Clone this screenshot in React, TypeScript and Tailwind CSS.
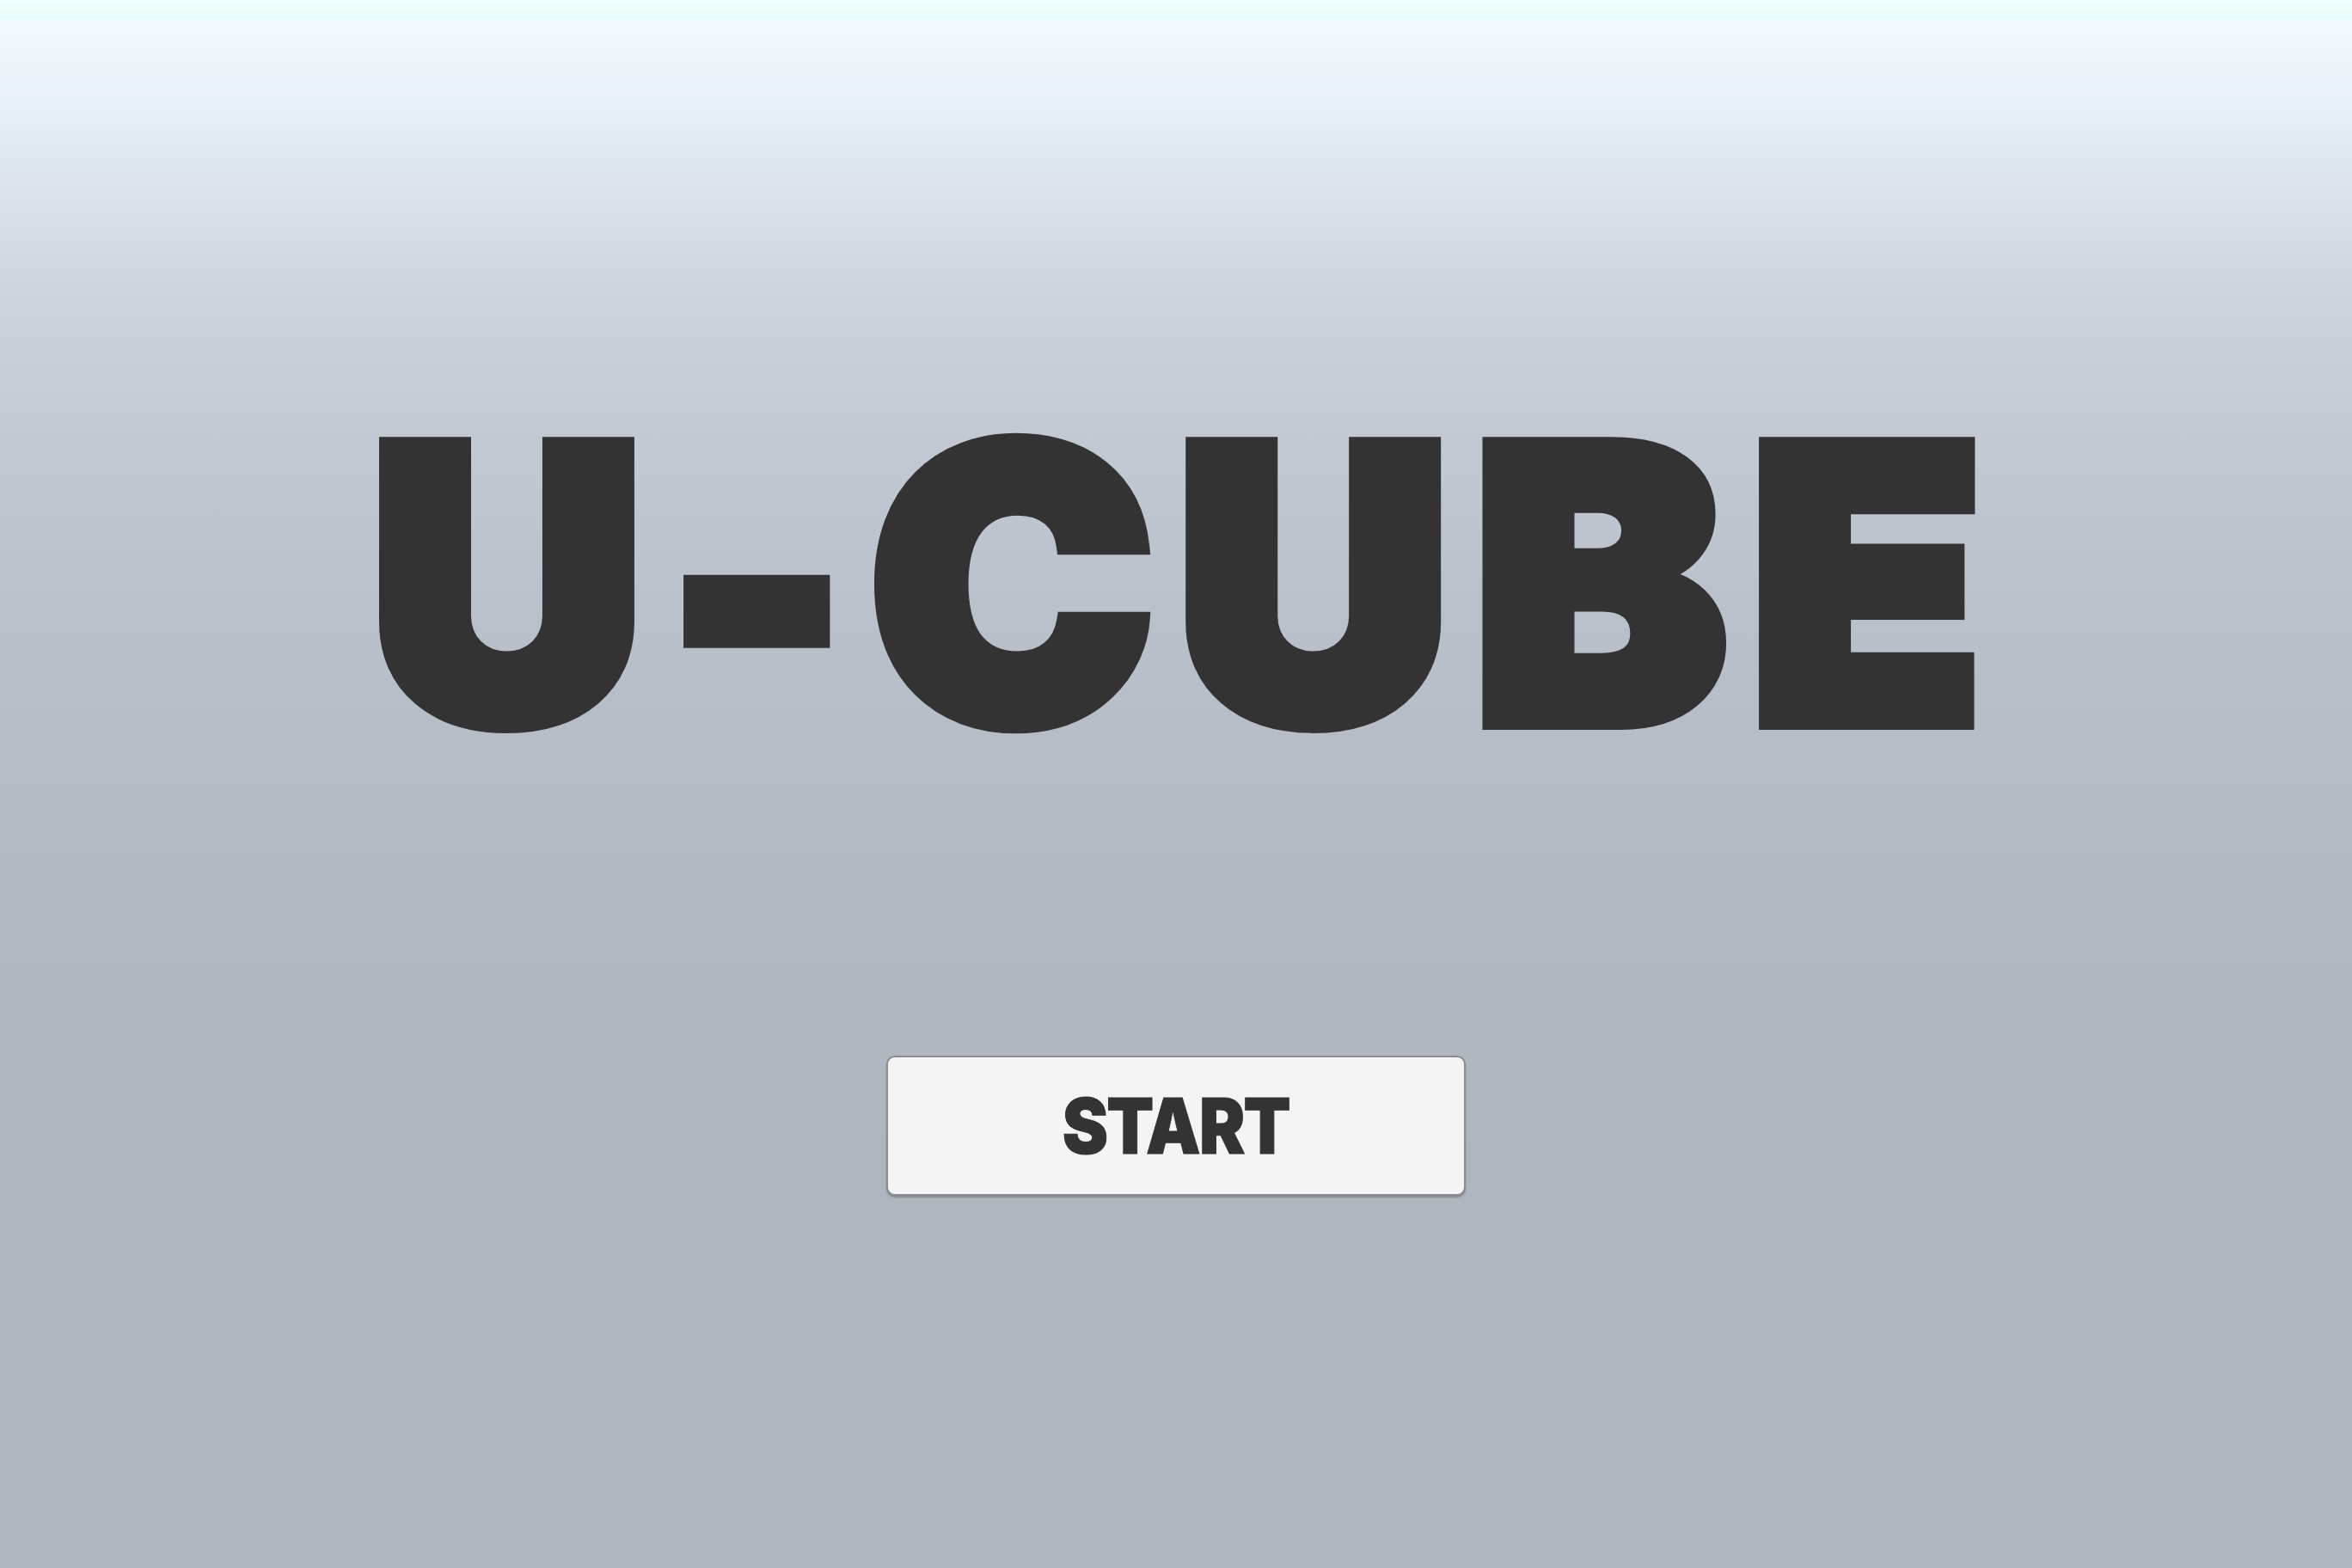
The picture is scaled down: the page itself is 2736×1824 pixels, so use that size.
export default function App() {
    return (
        <div className="min-h-screen w-full flex flex-col bg-[linear-gradient(180deg,#f6fdff_0%,#e9f1f9_6%,#dde5ee_11%,#cdd4dd_19%,#c2c9d2_28%,#b9c0c9_40%,#b3bac3_55%,#afb6be_70%,#aeb5bd_100%)]">
            {/* thin top band */}
            <div className="h-[23px] w-full bg-[linear-gradient(180deg,#f2fffe,#e4fbfa)]" />

            <div className="flex flex-col items-center">
                <h1
                    className="mt-[435px] ml-[27px] text-[441px] leading-none font-black text-[#333333] tracking-[27px] [-webkit-text-stroke:20px_#333333]"
                    style={{ fontFamily: 'Inter, "Liberation Sans", sans-serif' }}
                >
                    U-CUBE
                </h1>

                <button
                    className="mt-[329px] w-[674px] h-[163px] flex items-center justify-center rounded-[10px] border-2 border-[#8a8d91] bg-[#f4f4f4] shadow-[0_2px_2px_rgba(0,0,0,0.25)]"
                >
                    <span
                        className="inline-block scale-x-[0.9] text-[89px] leading-none font-black text-[#333333] tracking-[-2px] [-webkit-text-stroke:1px_#333333]"
                        style={{ fontFamily: 'Inter, "Liberation Sans", sans-serif' }}
                    >
                        START
                    </span>
                </button>
            </div>
        </div>
    )
}
